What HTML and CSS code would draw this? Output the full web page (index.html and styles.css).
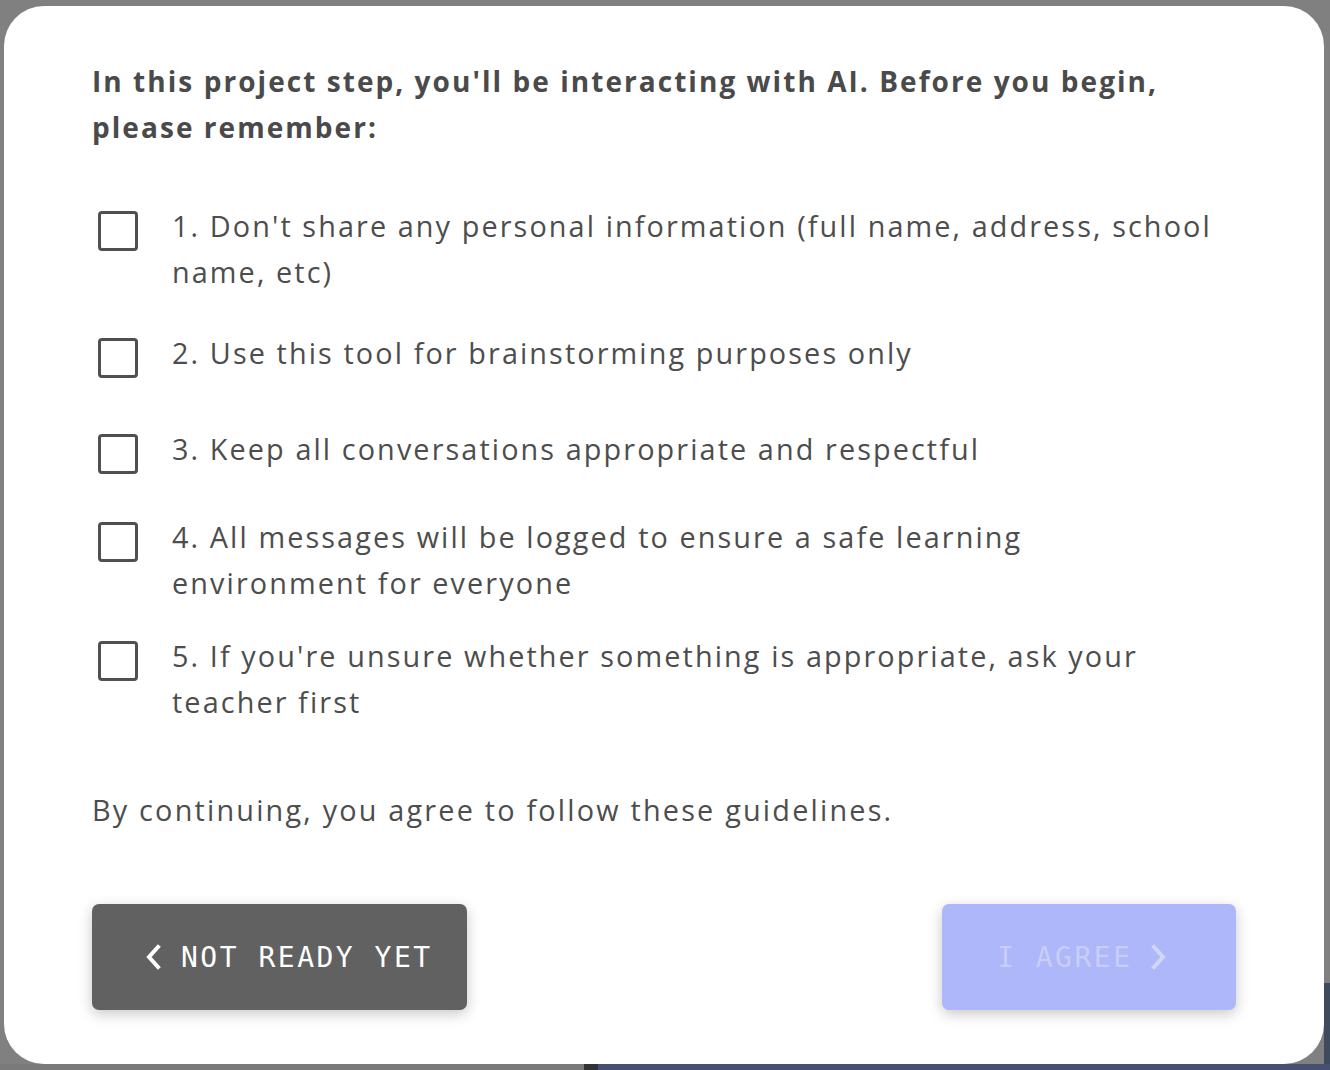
FILE: index.html
```html
<!DOCTYPE html>
<html lang="en">
<head>
<meta charset="utf-8">
<title>AI guidelines</title>
<link rel="stylesheet" href="styles.css">
</head>
<body>
<div class="modal">
  <h2 class="title">In this project step, you'll be interacting with AI. Before you begin, please remember:</h2>
  <ul class="rules">
    <li class="rule"><span class="box"></span><span class="rule-text">1. Don't share any personal information (full name, address, school name, etc)</span></li>
    <li class="rule"><span class="box"></span><span class="rule-text">2. Use this tool for brainstorming purposes only</span></li>
    <li class="rule"><span class="box"></span><span class="rule-text">3. Keep all conversations appropriate and respectful</span></li>
    <li class="rule"><span class="box"></span><span class="rule-text">4. All messages will be logged to ensure a safe learning environment for everyone</span></li>
    <li class="rule"><span class="box"></span><span class="rule-text">5. If you're unsure whether something is appropriate, ask your teacher first</span></li>
  </ul>
  <p class="note">By continuing, you agree to follow these guidelines.</p>
  <div class="actions">
    <button class="btn btn-back" type="button">
      <svg class="chev" width="16" height="26" viewBox="0 0 16 26"><path d="M13 3 L4 13 L13 23" fill="none" stroke="currentColor" stroke-width="4" stroke-linecap="square" stroke-linejoin="miter"/></svg>
      <span>NOT READY YET</span>
    </button>
    <button class="btn btn-agree" type="button">
      <span>I AGREE</span>
      <svg class="chev" width="16" height="26" viewBox="0 0 16 26"><path d="M3 3 L12 13 L3 23" fill="none" stroke="currentColor" stroke-width="4" stroke-linecap="square" stroke-linejoin="miter"/></svg>
    </button>
  </div>
</div>
</body>
</html>
```

FILE: styles.css
```css
html, body {
  margin: 0;
  padding: 0;
}
body {
  width: 1330px;
  height: 1070px;
  overflow: hidden;
  background-color: #808080;
  background-image:
    linear-gradient(to right, #7a7a7a 0, #7a7a7a 584px, #333333 584px, #333333 598px, #465171 598px, #465171 100%),
    linear-gradient(to bottom, #808080 0, #808080 983px, #3e4b5e 983px, #3e4b5e 100%);
  background-size: 100% 6px, 6px 100%;
  background-position: left bottom, right top;
  background-repeat: no-repeat;
  font-family: "Open Sans", "Liberation Sans", sans-serif;
  color: #4d4d4d;
  padding: 6px 6px 6px 4px;
  box-sizing: border-box;
}
.modal {
  background: #ffffff;
  border-radius: 40px;
  height: 1058px;
  box-sizing: border-box;
  padding: 52px 88px 54px 88px;
  display: flex;
  flex-direction: column;
}
.title {
  margin: 0;
  font-size: 28px;
  line-height: 46px;
  font-weight: 700;
  letter-spacing: 2.05px;
  color: #4a4a4a;
  width: 1144px;
}
.rules {
  list-style: none;
  margin: 53px 0 0 0;
  padding: 0;
  display: flex;
  flex-direction: column;
}
.rule {
  display: flex;
  align-items: flex-start;
  gap: 34px;
  font-size: 28.8px;
  line-height: 46px;
  letter-spacing: 2.1px;
}
.rule:nth-child(2) { margin-top: 35px; }
.rule:nth-child(3) { margin-top: 48px; }
.rule:nth-child(4) { margin-top: 40px; }
.rule:nth-child(5) { margin-top: 27px; }
.box {
  flex: none;
  width: 40px;
  height: 40px;
  box-sizing: border-box;
  border: 3.5px solid #505050;
  border-radius: 4px;
  margin: 8px 0 0 6px;
}
.rule-text {
  width: 1046px;
}
.note {
  margin: 62px 0 0 0;
  font-size: 28.8px;
  line-height: 46px;
  letter-spacing: 2.2px;
}
.actions {
  margin-top: auto;
  display: flex;
  justify-content: space-between;
  align-items: center;
}
.btn {
  height: 106px;
  border: none;
  border-radius: 7px;
  display: flex;
  align-items: center;
  font-family: "DejaVu Sans Mono", "Liberation Mono", monospace;
  font-size: 28px;
  letter-spacing: 2.5px;
  box-shadow: 0 4px 14px rgba(0, 0, 0, 0.22);
  cursor: pointer;
}
.btn-back {
  width: 375px;
  background: #616161;
  color: #ffffff;
  padding: 0 0 0 53px;
  gap: 20px;
}
.btn-agree {
  width: 294px;
  background: #adb7fa;
  color: #c9cef7;
  padding: 0 0 0 55px;
  gap: 18px;
}
.btn-agree .chev {
  color: #d2d7fa;
}
.chev {
  flex: none;
  display: block;
}
```
